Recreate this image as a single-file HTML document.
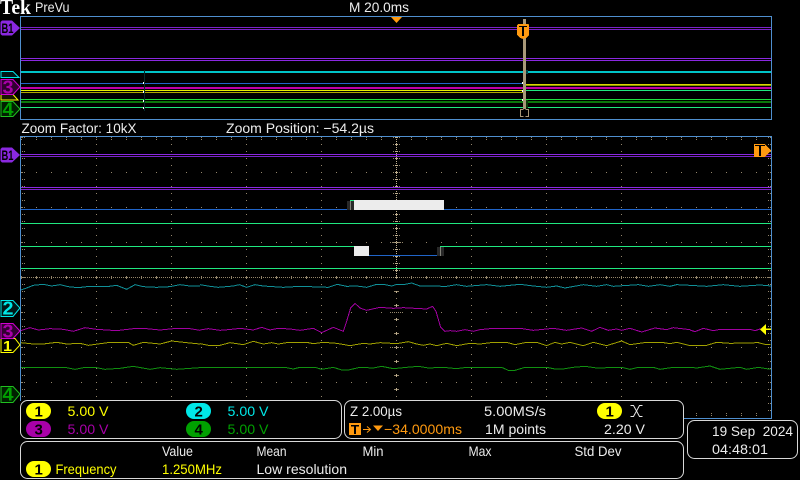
<!DOCTYPE html>
<html><head><meta charset="utf-8"><title>Tek PreVu</title>
<style>
html,body{margin:0;padding:0;background:#000;width:800px;height:480px;overflow:hidden}
svg{display:block}
text{font-family:"Liberation Sans",sans-serif;font-size:14px;fill:#ececec}
.y{fill:#ffff00}.c{fill:#00e8e8}.m{fill:#a800a8}.g{fill:#00a000}.o{fill:#ff9a10}
.k{fill:#000;font-size:15px;font-weight:bold}
.d{font-size:18px;font-weight:bold}
.b{fill:#000;font-size:14px;font-weight:bold}
polyline{fill:none;shape-rendering:crispEdges;stroke-linejoin:round}
</style></head><body>
<svg width="800" height="480" viewBox="0 0 800 480" xmlns="http://www.w3.org/2000/svg">
<defs>
<pattern id="gh" patternUnits="userSpaceOnUse" x="21" y="137" width="15" height="35"><rect width="1" height="1" fill="#94866c"/></pattern>
<pattern id="gv" patternUnits="userSpaceOnUse" x="96" y="137" width="75" height="7"><rect width="1" height="1" fill="#94866c"/></pattern>
<pattern id="gt" patternUnits="userSpaceOnUse" x="21" y="137" width="15" height="2"><rect width="1" height="1" fill="#94866c"/></pattern>
<pattern id="ge" patternUnits="userSpaceOnUse" x="22" y="137" width="2" height="7"><rect width="1" height="1" fill="#94866c"/></pattern>
<pattern id="gd" patternUnits="userSpaceOnUse" x="21" y="277" width="2" height="1"><rect width="1" height="1" fill="#94866c"/></pattern>
<pattern id="gk" patternUnits="userSpaceOnUse" x="21" y="276" width="15" height="3"><rect width="1" height="3" fill="#94866c"/></pattern>
<pattern id="cd" patternUnits="userSpaceOnUse" x="396" y="137" width="1" height="2"><rect width="1" height="1" fill="#c0b090"/></pattern>
<pattern id="cx" patternUnits="userSpaceOnUse" x="393" y="137" width="7" height="7"><rect x="0" width="1" height="1" fill="#94866c"/><rect x="2" width="3" height="1" fill="#c0b090"/><rect x="6" width="1" height="1" fill="#94866c"/></pattern>
<pattern id="cd2" patternUnits="userSpaceOnUse" x="396" y="284" width="1" height="7"><rect width="1" height="1" fill="#94866c"/></pattern>
<pattern id="cx2" patternUnits="userSpaceOnUse" x="394" y="291" width="5" height="14"><rect width="5" height="1" fill="#94866c"/><rect x="2" y="-1" width="1" height="3" fill="#c0b090"/><rect x="2" y="13" width="1" height="1" fill="#c0b090"/></pattern>
<pattern id="cdd" patternUnits="userSpaceOnUse" x="390" y="207" width="2" height="35"><rect width="1" height="1" fill="#94866c"/></pattern>
</defs>
<rect width="800" height="480" fill="#000"/>

<!-- grid -->
<rect x="21" y="172" width="750" height="211" fill="url(#gh)"/>
<rect x="96" y="137" width="600" height="281" fill="url(#gv)"/>
<rect x="21" y="137" width="750" height="4" fill="url(#gt)"/>
<rect x="21" y="413" width="750" height="4" fill="url(#gt)"/>
<rect x="22" y="137" width="3" height="280" fill="url(#ge)"/>
<rect x="768" y="137" width="3" height="280" fill="url(#ge)"/>
<rect x="21" y="277" width="750" height="1" fill="url(#gd)"/>
<rect x="21" y="276" width="750" height="3" fill="url(#gk)"/>
<rect x="396" y="137" width="1" height="140" fill="url(#cd)"/>
<rect x="393" y="137" width="7" height="141" fill="url(#cx)"/>
<rect x="396" y="284" width="1" height="134" fill="url(#cd2)"/>
<rect x="394" y="291" width="5" height="112" fill="url(#cx2)"/>
<rect x="390" y="207" width="13" height="1" fill="url(#cdd)"/>
<rect x="390" y="242" width="13" height="1" fill="url(#cdd)"/>
<rect x="390" y="312" width="13" height="1" fill="url(#cdd)"/>
<rect x="390" y="347" width="13" height="1" fill="url(#cdd)"/>

<!-- overview traces -->
<g shape-rendering="crispEdges">
<rect x="21" y="27" width="750" height="1" fill="#7a22c8"/>
<rect x="21" y="29" width="750" height="1" fill="#7a22c8"/>
<rect x="21" y="58" width="750" height="1" fill="#8a28e0"/>
<rect x="21" y="60" width="750" height="1" fill="#8a28e0"/>
<rect x="21" y="71" width="750" height="2" fill="#00c4c8"/>
<rect x="21" y="83" width="502" height="1" fill="#2064c8"/>
<rect x="21" y="87" width="750" height="2" fill="#c000a8"/>
<rect x="21" y="90" width="502" height="1" fill="#e8f000"/>
<rect x="21" y="92" width="502" height="1" fill="#b0a800"/>
<rect x="526" y="84" width="245" height="1" fill="#d8d800"/>
<rect x="526" y="85" width="245" height="1" fill="#909000"/>
<rect x="526" y="90" width="245" height="1" fill="#20e880"/>
<rect x="21" y="99" width="750" height="1" fill="#20e040"/>
<rect x="21" y="101" width="750" height="2" fill="#0a780a"/>
<rect x="21" y="107" width="750" height="1" fill="#20e880"/>
<rect x="144" y="70" width="1" height="41" fill="#062a2a"/>
<rect x="143" y="82" width="1" height="2" fill="#fff"/>
<rect x="143" y="91" width="1" height="2" fill="#fff"/>
<rect x="143" y="100" width="1" height="2" fill="#fff"/>
<rect x="143" y="107" width="1" height="2" fill="#fff"/>
<rect x="526" y="70" width="2" height="4" fill="#004848"/>
<rect x="526" y="100" width="2" height="8" fill="#0a3a0a"/>
<rect x="523" y="19" width="3" height="90" fill="#a89878"/>
<rect x="522" y="82" width="1" height="2" fill="#fff"/>
<rect x="522" y="90" width="1" height="2" fill="#fff"/>
<rect x="522" y="99" width="1" height="2" fill="#fff"/>
<path d="M523.5,109.5H520.5V116.5H523.5M525.5,109.5H528.5V116.5H525.5" fill="none" stroke="#a89878"/>
<path d="M518,24H528L529,25V35L526,38L523,39L520,38L517,35V25Z" fill="#ff9a10"/>
<rect x="519" y="26" width="8" height="1" fill="#000"/>
<rect x="522" y="26" width="2" height="10" fill="#000"/>
<path d="M391,17H402L396.5,23Z" fill="#ff9a10" shape-rendering="auto"/>
</g>

<!-- main digital traces -->
<g shape-rendering="crispEdges">
<rect x="21" y="154" width="750" height="1" fill="#8a28e0"/>
<rect x="21" y="156" width="750" height="1" fill="#7a22c8"/>
<rect x="21" y="187" width="750" height="1" fill="#8a28e0"/>
<rect x="21" y="189" width="750" height="1" fill="#7a22c8"/>
<rect x="21" y="209" width="330" height="1" fill="#2064c8"/>
<rect x="444" y="209" width="327" height="1" fill="#2064c8"/>
<rect x="347" y="201" width="7" height="9" fill="#282828"/>
<rect x="350" y="200" width="4" height="1" fill="#20e880"/>
<rect x="350" y="201" width="1" height="9" fill="#808078"/>
<rect x="354" y="200" width="90" height="10" fill="#ececec"/>
<rect x="21" y="223" width="750" height="1" fill="#20e880"/>
<rect x="21" y="246" width="333" height="1" fill="#20e880"/>
<rect x="354" y="246" width="15" height="10" fill="#ececec"/>
<rect x="369" y="255" width="72" height="1" fill="#2064c8"/>
<rect x="437" y="247" width="7" height="9" fill="#282828"/>
<rect x="440" y="247" width="1" height="9" fill="#808078"/>
<rect x="440" y="246" width="331" height="1" fill="#20e880"/>
<rect x="21" y="268" width="750" height="1" fill="#20e880"/>
</g>

<!-- analog traces: left -->
<g transform="translate(0,270) scale(.3333)" stroke-width="3">
<polyline stroke="#109098" points="62,60 80,54 100,46 130,43 155,48 180,44 205,50 235,53 260,50 320,50 350,46 380,58 405,44 430,50 470,52 510,50 540,44 570,48 600,48"/>
<polyline stroke="#a000a0" points="62,182 90,173 115,180 150,176 190,178 220,184 255,173 290,178 350,182 400,176 440,176 480,180 530,175 570,176 600,181"/>
<polyline stroke="#a0a000" points="62,218 100,222 130,222 170,217 200,222 240,220 265,226 330,217 385,217 400,226 430,217 480,222 515,213 560,218 600,222"/>
<polyline stroke="#109010" points="62,293 200,293 225,298 250,293 290,293 315,298 360,295 400,289 450,298 480,293 530,298 600,293"/>
</g>
<!-- analog traces: middle -->
<g transform="translate(200,278) scale(.3333)" stroke-width="3">
<polyline stroke="#109098" points="0,20 30,25 55,28 100,24 118,20 140,28 165,20 190,24 250,28 300,25 385,28 412,19 440,25 470,24 500,28 530,19 555,20 575,24 590,19 610,20 635,15 660,24 740,25 770,20 800,25 860,20 900,25 960,19 1000,24 1040,28 1070,24 1095,30 1150,20 1190,25 1220,20 1240,25 1315,20 1345,25 1380,20 1410,25 1430,20 1470,22 1520,25 1570,20 1620,25 1680,21 1714,24"/>
<polyline stroke="#a000a0" points="0,156 25,152 60,157 85,155 120,151 160,156 185,148 210,156 235,151 270,153 300,157 340,151 365,164 400,148 430,160 440,130 452,90 465,76 480,90 500,97 540,88 580,91 610,89 680,93 698,85 708,100 722,148 735,160 750,158 770,160 795,155 820,160 840,155 880,151 960,151 1000,157 1060,151 1100,157 1145,150 1175,160 1200,148 1225,157 1250,153 1265,157 1290,151 1325,162 1365,150 1400,155 1420,149 1470,155"/>
<polyline stroke="#a0a000" points="0,197 30,203 60,202 90,194 130,200 160,190 190,198 215,194 235,198 260,194 320,193 340,197 370,193 410,196 450,203 490,196 510,198 540,194 590,197 625,191 650,198 670,202 690,198 710,203 740,196 770,203 810,196 840,198 880,193 920,193 945,200 980,193 1010,193 1040,203 1065,193 1085,198 1110,193 1150,203 1180,193 1220,203 1265,189 1290,200 1340,193 1385,193 1410,197 1430,193 1470,203"/>
<polyline stroke="#109010" points="0,268 255,268 280,273 300,268 345,268 365,274 400,268 425,276 445,276 480,268 520,270 545,265 580,272 620,268 655,265 685,270 730,268 770,272 800,268 905,268 925,277 945,277 975,268 1040,268 1065,273 1090,273 1120,268 1155,265 1190,270 1265,268 1290,274 1315,268 1360,268 1380,274 1420,268 1470,268"/>
</g>
<!-- analog traces: right -->
<g transform="translate(680,310) scale(.3333)" stroke-width="3">
<polyline stroke="#a000a0" points="30,60 45,65 70,55 100,62 120,58 210,58 225,62 240,57 272,58"/>
<polyline stroke="#a0a000" points="30,106 80,106 110,97 150,100 235,98 255,103 272,103"/>
<polyline stroke="#109010" points="30,172 50,174 90,168 120,178 150,175 180,172 200,178 235,172 272,178"/>
</g>
<path d="M760,329.5L766,324V328.5H771V330H766V335Z" fill="#ffff00"/>

<!-- boxes -->
<g fill="#4f8fcf" shape-rendering="crispEdges">
<rect x="20" y="16" width="752" height="1"/>
<rect x="20" y="119" width="752" height="1"/>
<rect x="20" y="16" width="1" height="104"/>
<rect x="771" y="16" width="1" height="104"/>
<rect x="20" y="136" width="752" height="1"/>
<rect x="20" y="136" width="1" height="265"/>
<rect x="771" y="136" width="1" height="283"/>
<rect x="684" y="418" width="88" height="1"/>
</g>

<!-- trigger marker main -->
<path d="M754,144H765L771,150.5L765,157H754Z" fill="#ff9a10" shape-rendering="crispEdges"/>
<rect x="755" y="145" width="10" height="1" fill="#000"/><rect x="759" y="145" width="2" height="11" fill="#000"/>

<!-- overview markers -->
<path d="M1,71.5H13L19,77.5H1Z" fill="#001818" stroke="#00e8e8"/>
<path d="M1,94.5H13L18,100H1Z" fill="#181800" stroke="#ffff00"/>
<path d="M1,79.5H13L20,87L13,94.5H1Z" fill="#300030" stroke="#d000d0"/>
<text x="2.5" y="93.5" class="m d" textLength="11" lengthAdjust="spacingAndGlyphs">3</text>
<path d="M1,101.5H13L20,109L13,116.5H1Z" fill="#002000" stroke="#20c020"/>
<text x="2.5" y="115.5" class="g d" textLength="11" lengthAdjust="spacingAndGlyphs">4</text>
<path d="M2,20.5H12L20,28L12,35.5H2L0.5,34V22Z" fill="#8a28e0"/>
<text x="1.5" y="33" class="b" textLength="12" lengthAdjust="spacingAndGlyphs">B1</text>

<!-- main markers -->
<path d="M2,147.5H12L20,155L12,162.5H2L0.5,161V149Z" fill="#8a28e0"/>
<text x="1.5" y="160" class="b" textLength="12" lengthAdjust="spacingAndGlyphs">B1</text>
<path d="M1,300.5H13L20,308L13,316.5H1Z" fill="#001818" stroke="#00e8e8"/>
<text x="2.5" y="314.5" class="c d" textLength="11" lengthAdjust="spacingAndGlyphs">2</text>
<path d="M1,338.5H15L20,345L13,352.5H1Z" fill="#000" stroke="#ffff00"/>
<text x="3" y="351" class="y" style="font-size:15px;font-weight:bold" textLength="9" lengthAdjust="spacingAndGlyphs">1</text>
<path d="M1,323.5H13L20,331L13,338.5H1Z" fill="#300030" stroke="#d000d0"/>
<text x="2.5" y="337.5" class="m d" textLength="11" lengthAdjust="spacingAndGlyphs">3</text>
<path d="M1,386.5H13L20,394L13,402.5H1Z" fill="#002000" stroke="#20c020"/>
<text x="2.5" y="400.5" class="g d" textLength="11" lengthAdjust="spacingAndGlyphs">4</text>

<!-- header text -->
<text x="0" y="14" style="font-family:'Liberation Serif',serif;font-size:21px;font-weight:bold;fill:#fff" textLength="31" lengthAdjust="spacingAndGlyphs">Tek</text>
<text x="35" y="12" textLength="34.5" lengthAdjust="spacingAndGlyphs">PreVu</text>
<text x="349" y="12" textLength="60" lengthAdjust="spacingAndGlyphs">M 20.0ms</text>
<text x="21.5" y="133" textLength="115" lengthAdjust="spacingAndGlyphs">Zoom Factor: 10kX</text>
<text x="226" y="133" textLength="148" lengthAdjust="spacingAndGlyphs">Zoom Position: −54.2µs</text>

<!-- panels -->
<g fill="#000" stroke="#d8d8d8">
<rect x="20.5" y="400.5" width="321" height="38" rx="7"/>
<rect x="344.5" y="400.5" width="339" height="38" rx="7"/>
<rect x="20.5" y="441.5" width="663" height="37" rx="7"/>
<rect x="687.5" y="420.5" width="110" height="38" rx="7"/>
</g>

<!-- pills -->
<rect x="26" y="403" width="25" height="16" rx="8" fill="#ffff00"/>
<rect x="26" y="421" width="25" height="16" rx="8" fill="#a800a8"/>
<rect x="186" y="403" width="25" height="16" rx="8" fill="#00e8e8"/>
<rect x="186" y="421" width="25" height="16" rx="8" fill="#00a000"/>
<rect x="597" y="403" width="25" height="16" rx="8" fill="#ffff00"/>
<rect x="26" y="461" width="25" height="16" rx="8" fill="#ffff00"/>
<text x="34.5" y="416.5" class="k">1</text>
<text x="34.5" y="434.5" class="k">3</text>
<text x="194.5" y="416.5" class="k">2</text>
<text x="194.5" y="434.5" class="k">4</text>
<text x="605.5" y="416.5" class="k">1</text>
<text x="34.5" y="474.5" class="k">1</text>

<text x="67.5" y="416" class="y" textLength="41" lengthAdjust="spacingAndGlyphs">5.00 V</text>
<text x="67.5" y="434" class="m" textLength="41" lengthAdjust="spacingAndGlyphs">5.00 V</text>
<text x="227.5" y="416" class="c" textLength="41" lengthAdjust="spacingAndGlyphs">5.00 V</text>
<text x="227.5" y="434" class="g" textLength="41" lengthAdjust="spacingAndGlyphs">5.00 V</text>

<text x="350" y="416" textLength="52" lengthAdjust="spacingAndGlyphs">Z 2.00µs</text>
<text x="484" y="416" textLength="62" lengthAdjust="spacingAndGlyphs">5.00MS/s</text>
<path d="M630.5,405.5H633.5L639.5,416.5H642.5M630.5,416.5H633.5L639.5,405.5H642.5" fill="none" stroke="#e8e8e8"/>
<text x="604" y="434" textLength="41" lengthAdjust="spacingAndGlyphs">2.20 V</text>
<text x="485" y="434" textLength="61" lengthAdjust="spacingAndGlyphs">1M points</text>
<rect x="349" y="423" width="12" height="12" fill="#ff9a10"/>
<rect x="351" y="425" width="8" height="1.5" fill="#000"/><rect x="354" y="425" width="2" height="9" fill="#000"/>
<path d="M363,429.5H370M367,426.5L370.5,429.5L367,432.5" fill="none" stroke="#ff9a10"/>
<path d="M373,425.5H383L378,431Z" fill="#ff9a10"/>
<text x="384" y="434" class="o" textLength="78" lengthAdjust="spacingAndGlyphs">−34.0000ms</text>

<text x="162" y="456" textLength="31" lengthAdjust="spacingAndGlyphs">Value</text>
<text x="256.5" y="456" textLength="30" lengthAdjust="spacingAndGlyphs">Mean</text>
<text x="362.5" y="456" textLength="21" lengthAdjust="spacingAndGlyphs">Min</text>
<text x="468.5" y="456" textLength="23" lengthAdjust="spacingAndGlyphs">Max</text>
<text x="574.5" y="456" textLength="47" lengthAdjust="spacingAndGlyphs">Std Dev</text>
<text x="55.5" y="474" class="y" textLength="61" lengthAdjust="spacingAndGlyphs">Frequency</text>
<text x="162" y="474" class="y" textLength="60" lengthAdjust="spacingAndGlyphs">1.250MHz</text>
<text x="256.5" y="474" textLength="90.5" lengthAdjust="spacingAndGlyphs">Low resolution</text>

<text x="712" y="436" textLength="81" lengthAdjust="spacingAndGlyphs" xml:space="preserve">19 Sep  2024</text>
<text x="712" y="454" textLength="56" lengthAdjust="spacingAndGlyphs">04:48:01</text>
</svg>
</body></html>
